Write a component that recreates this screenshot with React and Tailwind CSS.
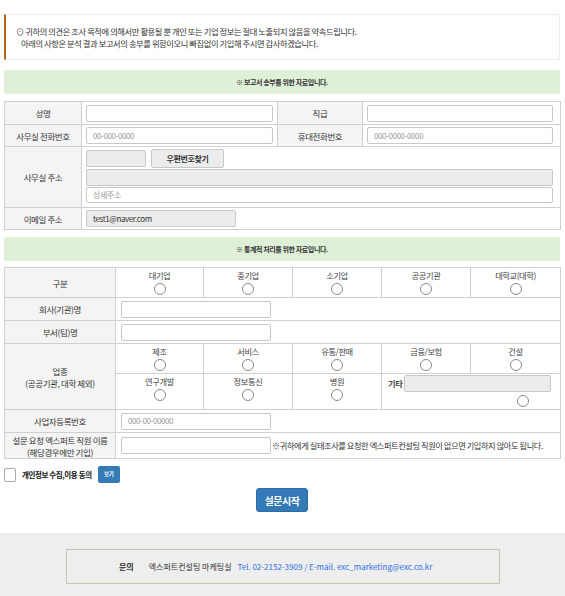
import React from "react";

const F = { fontFamily: "'Noto Sans CJK KR','Noto Sans',sans-serif" };

function Radio() {
  return <span className="mx-auto mt-[3px] block h-[12px] w-[12px] rounded-full border border-[#8a8a8a] bg-white" />;
}

function RadioCell({ label }) {
  return (
    <td className="border border-[#cfcfcf] align-top text-center">
      <div className="pt-[2px] text-[8.25px] leading-[10px] text-[#444]">{label}</div>
      <Radio />
    </td>
  );
}

const Lbl = ({ children, rowSpan }) => (
  <td rowSpan={rowSpan} className="border border-[#cfcfcf] bg-[#f4f4f4] text-center align-middle text-[8.5px] leading-[12px] text-[#333]">
    {children}
  </td>
);

const Inp = ({ w, ph, val, gray, h }) => (
  <div
    className={
      "flex items-center rounded-[2px] border border-[#c8c8c8] px-[6px] text-[8px] " +
      (h || "h-[17px] ") +
      (gray ? "bg-[#ececec] " : "bg-white ") +
      (val ? "text-[#333] " : "text-[#999] ") +
      (w || "")
    }
  >
    {val || ph}
  </div>
);

export default function App() {
  return (
    <div style={F} className="w-[565px] bg-white tracking-[-0.4px]">
      <div className="pl-[4px] pr-[5px] pt-[14px]">
        {/* notice */}
        <div className="flex h-[46px] flex-col justify-center border border-[#ececec] border-l-[2px] border-l-[#b0651a] pl-[10px] text-[8.25px] leading-[12px] text-[#333]">
          <div>⊙ 귀하의 의견은 조사 목적에 의해서만 활용될 뿐 개인 또는 기업 정보는 절대 노출되지 않음을 약속드립니다.</div>
          <div className="pl-[5px]">아래의 사항은 분석 결과 보고서의 송부를 위함이오니 빠짐없이 기입해 주시면 감사하겠습니다.</div>
        </div>

        <div className="mt-[10px] flex h-[24px] items-center justify-center rounded-[2px] bg-[#dff0d8] text-[7px] font-bold text-[#333]">
          ※ 보고서 송부를 위한 자료입니다.
        </div>

        <table className="mt-[7px] w-[556px] table-fixed border-collapse">
          <colgroup>
            <col className="w-[77px]" />
            <col className="w-[196px]" />
            <col className="w-[85px]" />
            <col className="w-[198px]" />
          </colgroup>
          <tbody>
            <tr className="h-[23px]">
              <Lbl>성명</Lbl>
              <td className="border border-[#cfcfcf] pl-[4px] pr-[4px]"><Inp /></td>
              <Lbl>직급</Lbl>
              <td className="border border-[#cfcfcf] pl-[4px] pr-[7px]"><Inp /></td>
            </tr>
            <tr className="h-[22px]">
              <Lbl>사무실 전화번호</Lbl>
              <td className="border border-[#cfcfcf] pl-[4px] pr-[4px]"><Inp ph="00-000-0000" /></td>
              <Lbl>휴대전화번호</Lbl>
              <td className="border border-[#cfcfcf] pl-[4px] pr-[7px]"><Inp ph="000-0000-0000" /></td>
            </tr>
            <tr className="h-[61px]">
              <Lbl>사무실 주소</Lbl>
              <td colSpan={3} className="border border-[#cfcfcf] pl-[4px] pr-[7px] pt-[2px] pb-[4px] align-top">
                <div className="flex items-center gap-[5px]">
                  <Inp w="w-[60px]" gray />
                  <div className="flex h-[19px] w-[73px] items-center justify-center rounded-[2px] border border-[#c8c8c8] bg-[#ececec] text-[8px] font-bold text-[#333]">우편번호찾기</div>
                </div>
                <div className="mt-[1px]"><Inp gray /></div>
                <div className="mt-[1px]"><Inp ph="상세주소" h="h-[16px] " /></div>
              </td>
            </tr>
            <tr className="h-[22px]">
              <Lbl>이메일 주소</Lbl>
              <td colSpan={3} className="border border-[#cfcfcf] px-[4px]">
                <Inp w="w-[150px]" gray val="test1@naver.com" />
              </td>
            </tr>
          </tbody>
        </table>

        <div className="mt-[7px] flex h-[24px] items-center justify-center rounded-[2px] bg-[#dff0d8] text-[7px] font-bold text-[#333]">
          ※ 통계적 처리를 위한 자료입니다.
        </div>

        <table className="mt-[6px] w-[556px] table-fixed border-collapse">
          <colgroup>
            <col className="w-[111px]" />
            <col className="w-[88px]" />
            <col className="w-[89px]" />
            <col className="w-[89px]" />
            <col className="w-[89px]" />
            <col className="w-[90px]" />
          </colgroup>
          <tbody>
            <tr className="h-[30px]">
              <Lbl>구분</Lbl>
              <RadioCell label="대기업" />
              <RadioCell label="중기업" />
              <RadioCell label="소기업" />
              <RadioCell label="공공기관" />
              <RadioCell label="대학교(대학)" />
            </tr>
            <tr className="h-[23px]">
              <Lbl>회사(기관)명</Lbl>
              <td colSpan={5} className="border border-[#cfcfcf] pl-[5px]"><Inp w="w-[150px]" /></td>
            </tr>
            <tr className="h-[23px]">
              <Lbl>부서(팀)명</Lbl>
              <td colSpan={5} className="border border-[#cfcfcf] pl-[5px]"><Inp w="w-[150px]" /></td>
            </tr>
            <tr className="h-[30px]">
              <Lbl rowSpan={2}>업종<br />(공공기관, 대학 제외)</Lbl>
              <RadioCell label="제조" />
              <RadioCell label="서비스" />
              <RadioCell label="유통/판매" />
              <RadioCell label="금융/보험" />
              <RadioCell label="건설" />
            </tr>
            <tr className="h-[36px]">
              <RadioCell label="연구개발" />
              <RadioCell label="정보통신" />
              <RadioCell label="병원" />
              <td colSpan={2} className="border border-[#cfcfcf] align-top">
                <div className="flex items-center pl-[6px] pr-[9px] pt-[1px]">
                  <span className="mr-[2px] text-[8.25px] font-bold text-[#444]">기타</span>
                  <div className="h-[17px] flex-1 rounded-[2px] border border-[#c8c8c8] bg-[#ececec]" />
                </div>
                <div className="flex justify-center pl-[104px]"><Radio /></div>
              </td>
            </tr>
            <tr className="h-[23px]">
              <Lbl>사업자등록번호</Lbl>
              <td colSpan={5} className="border border-[#cfcfcf] pl-[5px]"><Inp w="w-[150px]" ph="000-00-00000" /></td>
            </tr>
            <tr className="h-[26px]">
              <Lbl>설문 요청 엑스퍼트 직원 이름<br />(해당경우에만 기입)</Lbl>
              <td colSpan={5} className="border border-[#cfcfcf] pl-[5px]">
                <div className="flex items-center">
                  <Inp w="w-[150px]" />
                  <span className="ml-[1px] whitespace-nowrap text-[8.2px] text-[#333]">※귀하에게 실태조사를 요청한 엑스퍼트컨설팅 직원이 없으면 기입하지 않아도 됩니다.</span>
                </div>
              </td>
            </tr>
          </tbody>
        </table>

        <div className="mt-[7px] flex items-center">
          <span className="h-[14px] w-[12px] rounded-[2px] border border-[#aaa] bg-white" />
          <span className="ml-[6px] text-[7.5px] font-bold text-[#111]">개인정보 수집,이용 동의</span>
          <span className="ml-[6px] flex h-[17px] w-[22px] items-center justify-center rounded-[2px] bg-[#337ab7] text-[5.5px] font-bold text-white">보기</span>
        </div>

        <div className="mt-[5px] flex justify-center">
          <div className="flex h-[24px] w-[52px] items-center justify-center rounded-[3px] border border-[#2e6da4] bg-[#337ab7] text-[10px] font-bold text-white">설문시작</div>
        </div>
      </div>

      <div className="mt-[21px] bg-[#eeeeee] pb-[13px] pt-[16px]">
        <div className="ml-[66px] flex h-[35px] w-[434px] items-center border border-[#c5c5b3] pl-[52px] text-[8px] tracking-normal">
          <span className="font-bold text-[#333]">문의</span>
          <span className="ml-[15px] text-[#333]">엑스퍼트컨설팅 마케팅실</span>
          <span className="ml-[6px] text-[#2f6fe4]">Tel. 02-2152-3909 / E-mail. exc_marketing@exc.co.kr</span>
        </div>
      </div>
    </div>
  );
}
